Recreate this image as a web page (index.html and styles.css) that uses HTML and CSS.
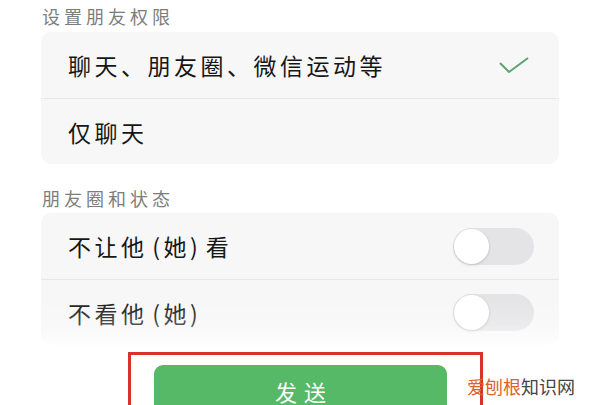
FILE: index.html
```html
<!DOCTYPE html>
<html lang="zh-CN">
<head>
    <meta charset="UTF-8">
    <title>设置朋友权限</title>
    <link rel="stylesheet" href="styles.css">
</head>
<body>
<main class="page">
    <div class="section-title first">设置朋友权限</div>
    <div class="card">
        <div class="row">
            <span class="label">聊天、朋友圈、微信运动等</span>
            <svg class="check" width="30" height="18" viewBox="0 0 30 18">
                <path d="M1 7 L10 16 L29 2" fill="none" stroke="#5aa46e" stroke-width="2"/>
            </svg>
        </div>
        <div class="row">
            <span class="label">仅聊天</span>
        </div>
    </div>

    <div class="section-title">朋友圈和状态</div>
    <div class="card card-fade">
        <div class="row">
            <span class="label">不让他 (她) 看</span>
            <span class="toggle"><span class="knob"></span></span>
        </div>
        <div class="row">
            <span class="label">不看他 (她)</span>
            <span class="toggle"><span class="knob"></span></span>
        </div>
    </div>

    <div class="action">
        <button class="send">发送</button>
    </div>

    <div class="watermark"><span class="mark-hot">爱刨根</span>知识网</div>
</main>
</body>
</html>
```

FILE: styles.css
```css
html, body {
    margin: 0;
    height: 405px;
    overflow: hidden;
    background: #fff;
}
.page {
    position: relative;
    width: 600px;
    height: 405px;
    font-family: "Noto Sans CJK SC", "Noto Sans", sans-serif;
}
.section-title {
    margin: 22px 0 3px;
    padding-left: 42px;
    font-size: 18px;
    line-height: 24px;
    letter-spacing: 4px;
    color: #7d7d7d;
}
.section-title.first {
    margin: 0 0 4px;
    padding-top: 4px;
}
.card {
    position: relative;
    margin: 0 41px;
    background: #f7f7f7;
    border-radius: 10px;
}
.card-fade::after {
    content: "";
    position: absolute;
    left: -2px;
    right: -2px;
    top: 86px;
    bottom: -6px;
    background: linear-gradient(rgba(255,255,255,0), rgba(255,255,255,0.25) 50%, #fff);
}
.row {
    display: flex;
    align-items: center;
    justify-content: space-between;
    height: 66px;
    padding: 0 25px 0 27px;
    box-sizing: border-box;
}
.row + .row {
    border-top: 1px solid #e6e6e6;
}
.label {
    font-size: 23px;
    letter-spacing: 3.5px;
    word-spacing: -4px;
    color: #161616;
}
.check {
    margin-right: 5px;
}
.toggle {
    display: flex;
    align-items: center;
    width: 81px;
    height: 37px;
    padding: 1px;
    box-sizing: border-box;
    border-radius: 19px;
    background: #e4e4e6;
}
.knob {
    width: 35px;
    height: 35px;
    border-radius: 50%;
    background: #fff;
    box-shadow: 0 1px 3px rgba(0,0,0,0.18);
}
.action {
    margin: 7px 0 0 128px;
    width: 355px;
    height: 90px;
    padding: 10px 33px 0 23px;
    box-sizing: border-box;
    border: 3px solid #d8322c;
}
.send {
    display: block;
    width: 100%;
    height: 54px;
    border: none;
    border-radius: 9px;
    background: #56b968;
    color: #fff;
    font-family: inherit;
    font-size: 22px;
    letter-spacing: 7px;
    text-indent: 7px;
    padding: 0 0 2px;
}
.watermark {
    position: absolute;
    left: 467px;
    top: 374px;
    font-size: 18px;
    line-height: 24px;
    color: #444;
}
.mark-hot {
    color: #e0622a;
}
```
